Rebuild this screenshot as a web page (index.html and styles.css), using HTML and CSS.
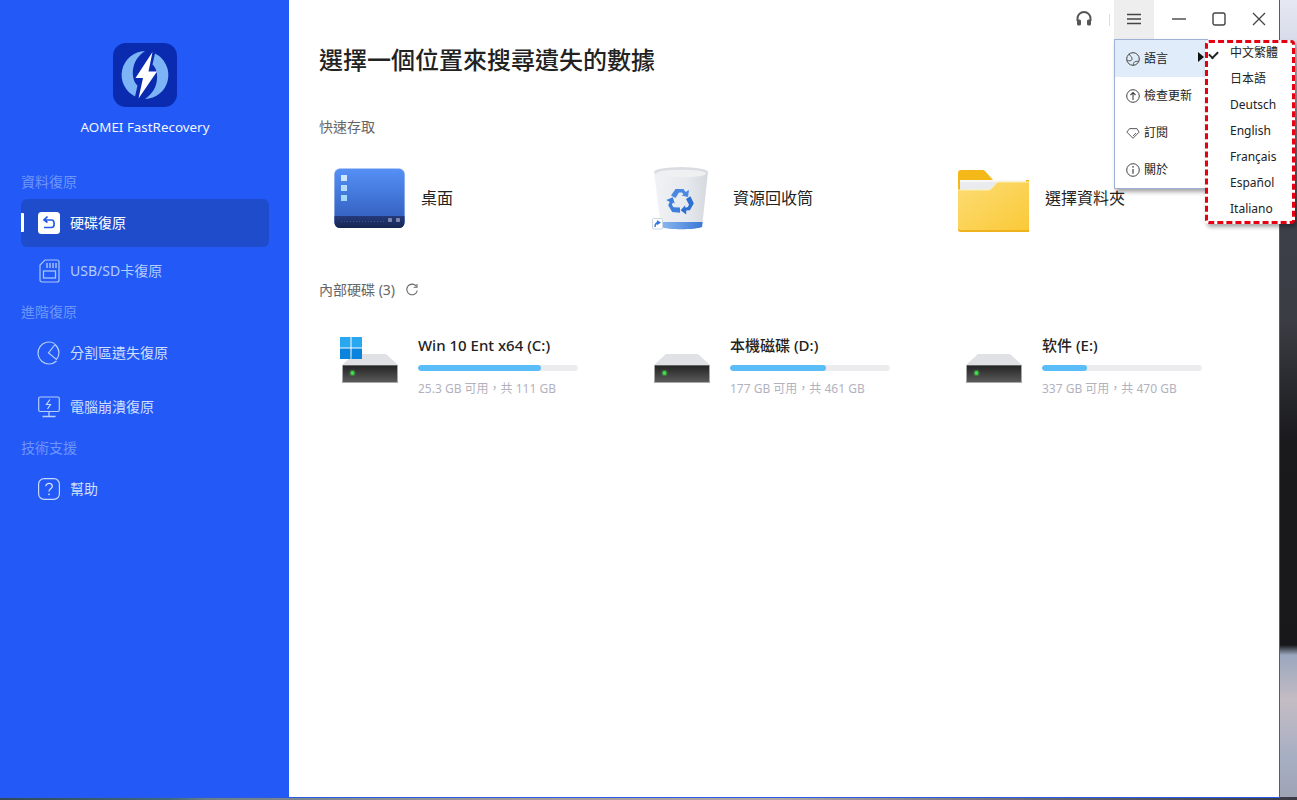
FILE: index.html
```html
<!DOCTYPE html>
<html lang="zh-Hant">
<head>
<meta charset="utf-8">
<title>AOMEI FastRecovery</title>
<link rel="stylesheet" href="styles.css">
</head>
<body>
<div class="window">
  <aside class="sidebar">
    <svg class="logo" viewBox="0 0 64 64" aria-hidden="true">
      <rect width="64" height="64" rx="13" fill="#0a2bb0"/>
      <path d="M32 8A24 24 0 0 0 22 53.500L24.500 42.500C18 37 16.500 18 32 8Z" fill="#7cb4f6"/>
      <path d="M32 56A24 24 0 0 0 42 10.500L39.500 21.500C46 27 47.500 46 32 56Z" fill="#7cb4f6"/>
      <path d="M39.500 9L22.500 35H30L25.500 55.500L44 28.500H35.500Z" fill="#fff"/>
    </svg>
    <div class="brand">AOMEI FastRecovery</div>
    <div class="section first">資料復原</div>
    <div class="nav active">
      <svg class="nav-icon" viewBox="0 0 22 22" aria-hidden="true">
        <rect width="22" height="22" rx="3.500" fill="#fff"/>
        <path d="M9.500 4.500L6 8L9.500 10.500M6.500 8H13.500C17 8 17 15.500 13.500 15.500H6" fill="none" stroke="#2359e8" stroke-width="1.700"/>
      </svg>
      <span>硬碟復原</span>
    </div>
    <div class="nav">
      <svg class="nav-icon sd" viewBox="0 0 22 24" aria-hidden="true">
        <path d="M7 1H19A2 2 0 0 1 21 3V21A2 2 0 0 1 19 23H4A2 2 0 0 1 2 21V6Z" fill="none" stroke="#a9c6fb" stroke-width="1.200"/>
        <path d="M9 4V9M12 4V9M15 4V9M18 4V9" stroke="#a9c6fb" stroke-width="1.400"/>
        <rect x="5.500" y="12" width="12" height="7" fill="none" stroke="#a9c6fb" stroke-width="1.300"/>
      </svg>
      <span>USB/SD卡復原</span>
    </div>
    <div class="section">進階復原</div>
    <div class="nav tall">
      <svg class="nav-icon wide" viewBox="0 0 24 24" aria-hidden="true">
        <path d="M17.500 2.500A11 11 0 1 0 19.500 20" fill="none" stroke="#b6cffc" stroke-width="1.200"/>
        <path d="M18 3.500L11.500 12L19.500 18.500C23 14 23 8 18 3.500Z" fill="none" stroke="#b6cffc" stroke-width="1.200"/>
      </svg>
      <span>分割區遺失復原</span>
    </div>
    <div class="nav tall">
      <svg class="nav-icon" viewBox="0 0 22 22" aria-hidden="true">
        <rect x="0.700" y="1" width="20.600" height="14.500" rx="1.500" fill="none" stroke="#b6cffc" stroke-width="1.200"/>
        <path d="M12 3.500L8.500 8.500H12.500L9.500 13" fill="none" stroke="#c5d9fd" stroke-width="1.200"/>
        <path d="M11 15.500V20M4.500 20.500H17.500" stroke="#b6cffc" stroke-width="1.300"/>
      </svg>
      <span>電腦崩潰復原</span>
    </div>
    <div class="section gap4">技術支援</div>
    <div class="nav tall">
      <svg class="nav-icon" viewBox="0 0 22 22" aria-hidden="true">
        <rect x="0.600" y="0.600" width="20.800" height="20.800" rx="5.500" fill="none" stroke="#c5d9fd" stroke-width="1.200"/>
        <path d="M7.800 8.300C7.800 4.500 14.300 4.500 14.300 8.300C14.300 10.800 11 10.800 11 13.500" fill="none" stroke="#d5e3fe" stroke-width="1.300"/>
        <circle cx="11" cy="16.300" r="0.900" fill="#d5e3fe"/>
      </svg>
      <span>幫助</span>
    </div>
  </aside>

  <main class="main">
    <header class="topbar">
      <svg class="tool-icon" viewBox="0 0 16 16" aria-hidden="true">
        <path d="M1.500 10V7.500A6.500 6.500 0 0 1 14.500 7.500V10" fill="none" stroke="#555" stroke-width="2"/>
        <rect x="1" y="8.500" width="4" height="6" rx="1.500" fill="#555"/>
        <rect x="11" y="8.500" width="4" height="6" rx="1.500" fill="#555"/>
      </svg>
      <span class="sep"></span>
      <div class="menu-anchor">
        <button class="winbtn open" type="button" aria-label="menu">
          <svg class="glyph" viewBox="0 0 14 14" aria-hidden="true"><path d="M0 2.500H14M0 7H14M0 11.500H14" stroke="#444" stroke-width="1.300"/></svg>
        </button>
        <div class="menu">
          <div class="menu-row hover">
            <svg class="menu-icon" viewBox="0 0 14 14" aria-hidden="true">
              <circle cx="7" cy="7" r="6.300" fill="none" stroke="#444" stroke-width="1"/>
              <path d="M3 1.800C4 4 6.500 5 6 7.500C5.700 9 3 9 1.200 8.500M7.500 13.200C7 10.500 8.500 9 12.700 9.300" fill="none" stroke="#444" stroke-width="0.900"/>
            </svg>
            <span>語言</span>
            <i class="arrow"></i>
          </div>
          <div class="menu-row">
            <svg class="menu-icon" viewBox="0 0 14 14" aria-hidden="true">
              <circle cx="7" cy="7" r="6.300" fill="none" stroke="#444" stroke-width="1"/>
              <path d="M7 11V3.800M4.500 6L7 3.500L9.500 6" fill="none" stroke="#444" stroke-width="1.100"/>
            </svg>
            <span>檢查更新</span>
          </div>
          <div class="menu-row">
            <svg class="menu-icon" viewBox="0 0 16 14" aria-hidden="true">
              <path d="M4 2H12.500L15 6L8 13L1 6Z" fill="none" stroke="#444" stroke-width="1"/>
              <path d="M8 10.500L11.500 7" stroke="#444" stroke-width="1"/>
            </svg>
            <span>訂閱</span>
          </div>
          <div class="menu-row">
            <svg class="menu-icon" viewBox="0 0 14 14" aria-hidden="true">
              <circle cx="7" cy="7" r="6.300" fill="none" stroke="#444" stroke-width="1"/>
              <path d="M7 6V10.800" stroke="#444" stroke-width="1.200"/>
              <circle cx="7" cy="3.900" r="0.800" fill="#444"/>
            </svg>
            <span>關於</span>
          </div>
          <ul class="submenu">
            <li class="checked">中文繁體</li>
            <li>日本語</li>
            <li>Deutsch</li>
            <li>English</li>
            <li>Français</li>
            <li>Español</li>
            <li>Italiano</li>
          </ul>
        </div>
      </div>
      <div class="win-controls">
        <button class="winbtn" type="button" aria-label="minimize">
          <svg class="glyph" viewBox="0 0 14 14" aria-hidden="true"><path d="M0 7H14" stroke="#444" stroke-width="1.400"/></svg>
        </button>
        <button class="winbtn" type="button" aria-label="maximize">
          <svg class="glyph" viewBox="0 0 14 14" aria-hidden="true"><rect x="1" y="1" width="12" height="12" rx="2" fill="none" stroke="#444" stroke-width="1.400"/></svg>
        </button>
        <button class="winbtn" type="button" aria-label="close">
          <svg class="glyph" viewBox="0 0 14 14" aria-hidden="true"><path d="M1 1L13 13M13 1L1 13" stroke="#444" stroke-width="1.300"/></svg>
        </button>
      </div>
    </header>

    <div class="content">
      <h1 class="title">選擇一個位置來搜尋遺失的數據</h1>
      <div class="label quick-label"><span>快速存取</span></div>
      <div class="grid quick">
        <div class="place">
          <svg class="place-icon" viewBox="0 0 72 68" aria-hidden="true">
            <defs>
              <linearGradient id="deskG" x1="0" y1="0" x2="0" y2="1"><stop offset="0" stop-color="#5590f5"/><stop offset="1" stop-color="#2e58b8"/></linearGradient>
              <linearGradient id="deskB" x1="0" y1="0" x2="0" y2="1"><stop offset="0" stop-color="#243a7c"/><stop offset="1" stop-color="#172650"/></linearGradient>
            </defs>
            <rect x="0" y="3" width="71" height="60" rx="6" fill="#cfdcf6"/>
            <rect x="0.500" y="3.800" width="70" height="59" rx="5.500" fill="url(#deskG)"/>
            <path d="M0.500 51H70.500V57.500A5.500 5.500 0 0 1 65 63H6A5.500 5.500 0 0 1 0.500 57.500Z" fill="url(#deskB)"/>
            <rect x="7" y="10" width="6" height="6" fill="#cfe6fc"/>
            <rect x="7" y="20" width="6" height="6" fill="#b6dcfa"/>
            <rect x="7" y="30" width="6" height="6" fill="#a4daf8"/>
            <path d="M7 56.500H50" stroke="#40558f" stroke-width="1" stroke-dasharray="1 2"/>
            <rect x="54" y="53" width="4" height="4" rx="1" fill="#7f88ac"/>
            <rect x="62" y="53" width="4" height="4" rx="1" fill="#7f88ac"/>
          </svg>
          <span class="place-name">桌面</span>
        </div>
        <div class="place">
          <svg class="place-icon" viewBox="0 0 72 68" aria-hidden="true">
            <defs>
              <linearGradient id="binG" x1="0" y1="0" x2="1" y2="0"><stop offset="0" stop-color="#f0f2f5"/><stop offset="0.600" stop-color="#e6e9ed"/><stop offset="1" stop-color="#d5d9de"/></linearGradient>
              <linearGradient id="binB" x1="0" y1="0" x2="1" y2="0"><stop offset="0" stop-color="#8db8ef"/><stop offset="1" stop-color="#3a78d6"/></linearGradient>
              <path id="rc" d="M-9.500 -6L-5 -12.500H3L5 -9.500L8.500 -11.500L7.500 -4.500L1 -6L3 -7L1.500 -9H-1.500L-5 -3.500Z"/>
            </defs>
            <path d="M8 7L15 62C22 65 49 65 56 62L62 7Z" fill="url(#binG)"/>
            <path d="M14.400 57H56.600L56 62C49 65 22 65 15 62Z" fill="url(#binB)"/>
            <ellipse cx="35" cy="7" rx="27" ry="5" fill="#d9dde1"/>
            <ellipse cx="35" cy="8.500" rx="25" ry="3.800" fill="#eef0f2"/>
            <g transform="translate(34.500 36.500)">
              <use href="#rc" fill="#4a88e2"/>
              <use href="#rc" fill="#2f6fd2" transform="rotate(120)"/>
              <use href="#rc" fill="#3f7fdc" transform="rotate(240)"/>
            </g>
            <rect x="6.500" y="53.500" width="10" height="10.500" rx="1" fill="#fff" stroke="#cdd6e4" stroke-width="1"/>
            <path d="M9 62C9 58.500 10.500 57.500 13 57.500M11 55.800L13.700 57.500L11 59.500" fill="none" stroke="#2f78de" stroke-width="1.400"/>
          </svg>
          <span class="place-name">資源回收筒</span>
        </div>
        <div class="place">
          <svg class="place-icon" viewBox="0 0 72 68" aria-hidden="true">
            <defs>
              <linearGradient id="foldG" x1="0" y1="0" x2="1" y2="1"><stop offset="0" stop-color="#fbdc74"/><stop offset="1" stop-color="#fbc937"/></linearGradient>
            </defs>
            <path d="M0 8A3 3 0 0 1 3 5H24A3 3 0 0 1 27 6L35 15H71V60H0Z" fill="#f4b818"/>
            <path d="M2 15H68V40H2Z" fill="#e9ebee"/>
            <path d="M2 15H68V17H2Z" fill="#f7f7f7"/>
            <path d="M0 25H30C32 25 33 24 34 23L38 18.500C39 17.500 40 17 41.500 17H71V67H3A3 3 0 0 1 0 64Z" fill="url(#foldG)"/>
            <path d="M0 25H30C32 25 33 24 34 23L38 18.500C39 17.500 40 17 41.500 17H71" fill="none" stroke="#fdeeb4" stroke-width="1"/>
            <path d="M0 64A3 3 0 0 0 3 67H71V65H2Z" fill="#eeb21f"/>
          </svg>
          <span class="place-name">選擇資料夾</span>
        </div>
      </div>

      <div class="label drive-label">
        <span>內部硬碟 (3)</span>
        <svg class="refresh" viewBox="0 0 14 14" aria-hidden="true">
          <path d="M11.500 3.500A5.300 5.300 0 1 0 12.300 7.500" fill="none" stroke="#666" stroke-width="1.100"/>
          <path d="M12 1V4.300H8.700" fill="none" stroke="#666" stroke-width="1.100"/>
        </svg>
      </div>
      <div class="grid drives">
        <div class="drive">
          <svg class="drive-icon" viewBox="0 0 72 50" aria-hidden="true">
            <defs>
              <linearGradient id="hddG" x1="0" y1="0" x2="0" y2="1"><stop offset="0" stop-color="#232323"/><stop offset="1" stop-color="#5a5a5a"/></linearGradient>
              <g id="hddBody">
                <path d="M20 20H52L64 31V49H8V31Z" fill="#dfe1e4"/>
                <rect x="8" y="31" width="56" height="18" fill="#a8a8a8"/>
                <rect x="9" y="31.500" width="54" height="16.500" fill="url(#hddG)"/>
                <circle cx="18.500" cy="39" r="3.200" fill="#3ee04a" opacity="0.300"/>
                <circle cx="18.500" cy="39" r="1.900" fill="#3ee04a"/>
              </g>
            </defs>
            <use href="#hddBody"/>
            <rect x="6" y="3" width="10.500" height="10.500" fill="#29a8ef"/>
            <rect x="17.500" y="3" width="10.500" height="10.500" fill="#29a8ef"/>
            <rect x="6" y="14.500" width="10.500" height="10.500" fill="#0c84de"/>
            <rect x="17.500" y="14.500" width="10.500" height="10.500" fill="#0c84de"/>
          </svg>
          <div class="drive-info">
            <div class="drive-name">Win 10 Ent x64 (C:)</div>
            <div class="bar"><div class="fill" style="width:77%"></div></div>
            <div class="drive-stat">25.3 GB 可用，共 111 GB</div>
          </div>
        </div>
        <div class="drive">
          <svg class="drive-icon" viewBox="0 0 72 50" aria-hidden="true">
            <use href="#hddBody"/>
          </svg>
          <div class="drive-info">
            <div class="drive-name">本機磁碟 (D:)</div>
            <div class="bar"><div class="fill" style="width:60%"></div></div>
            <div class="drive-stat">177 GB 可用，共 461 GB</div>
          </div>
        </div>
        <div class="drive">
          <svg class="drive-icon" viewBox="0 0 72 50" aria-hidden="true">
            <use href="#hddBody"/>
          </svg>
          <div class="drive-info">
            <div class="drive-name">软件 (E:)</div>
            <div class="bar"><div class="fill" style="width:28%"></div></div>
            <div class="drive-stat">337 GB 可用，共 470 GB</div>
          </div>
        </div>
      </div>
    </div>
  </main>
</div>
</body>
</html>
```
FILE: styles.css
```css
* { box-sizing: border-box; }

html, body { height: 100%; }

body {
  margin: 0;
  overflow: hidden;
  font-family: "Noto Sans", "Noto Sans CJK TC", sans-serif;
  background-color: #777;
  background-image:
    linear-gradient(90deg, #2f4a58 0, #3f6a7d 13%, #6a7f88 16%, #a89a96 40%, #b5a7a2 60%, #6a6670 80%, #3c3a42 100%),
    linear-gradient(180deg, #e6e8f3 0, #d8dbe9 40px, #6b7382 140px, #3c3f48 225px, #3b3d44 320px, #1a1a1d 440px, #18181b 645px, #9aa7be 655px, #c4bcc4 700px, #a5aec2 760px, #9fa3b3 800px);
  background-size: 100% 3px, 100% 100%;
  background-position: left bottom, left top;
  background-repeat: no-repeat;
}

.window {
  position: relative;
  display: flex;
  width: 1280px;
  height: 798px;
  background: #fff;
  border-right: 1px solid #2a5be8;
  border-bottom: 1px solid #2a5be8;
}

/* sidebar */
.sidebar {
  flex: 0 0 289px;
  display: flex;
  flex-direction: column;
  align-items: stretch;
  padding: 43px 20px 0 21px;
  background: #2259f7;
  color: #fff;
}

.logo {
  display: block;
  align-self: center;
  width: 64px;
  height: 64px;
  margin-left: -1px;
  flex: none;
}

.brand {
  margin-top: 10px;
  height: 20px;
  line-height: 20px;
  font-size: 13.4px;
  text-align: center;
  color: #f1f5ff;
  white-space: nowrap;
}

.section {
  height: 20px;
  line-height: 20px;
  margin-top: 7px;
  font-size: 14px;
  color: #6f96f7;
  white-space: nowrap;
}

.section.first { margin-top: 35px; margin-bottom: 7px; }
.section.gap4 { margin-top: 4px; }

.section + .nav.tall { margin-top: 4px; }

.nav {
  position: relative;
  display: flex;
  align-items: center;
  gap: 10px;
  height: 48px;
  padding-left: 17px;
  font-size: 14px;
  color: #b4cdfc;
  border-radius: 6px;
  white-space: nowrap;
  flex: none;
}

.nav span { padding-bottom: 2px; }

.nav.tall { height: 54px; color: #cfdffd; }

.nav.active {
  background: #1e4ccb;
  color: #fff;
}

.nav.active::before {
  content: "";
  position: absolute;
  left: 0;
  top: 14px;
  width: 3px;
  height: 19px;
  background: #fff;
  border-radius: 0 1px 1px 0;
}

.nav-icon {
  width: 22px;
  height: 22px;
  flex: none;
  overflow: visible;
}

.nav-icon.sd { height: 24px; }
.nav-icon.wide { width: 24px; height: 24px; margin: 0 -1px; }

/* main */
.main {
  flex: 1;
  min-width: 0;
  display: flex;
  flex-direction: column;
}

.topbar {
  display: flex;
  align-items: center;
  justify-content: flex-end;
  height: 39px;
  flex: none;
}

.tool-icon {
  width: 16px;
  height: 16px;
  margin-bottom: 1px;
  flex: none;
}

.sep {
  width: 1px;
  height: 12px;
  margin: 0 4px 0 17px;
  background: #dcdcdc;
  flex: none;
}

.menu-anchor {
  position: relative;
  margin-right: 5px;
  flex: none;
}

.win-controls { display: flex; flex: none; }

.winbtn {
  display: flex;
  align-items: center;
  justify-content: center;
  width: 40px;
  height: 39px;
  padding: 0 0 1px;
  border: 0;
  background: transparent;
}

.winbtn.open { background: #eeeeee; }

.glyph { width: 14px; height: 14px; }

.menu {
  position: absolute;
  top: 39px;
  left: 0;
  width: 94px;
  height: 150px;
  border: 1px solid #9fb2d6;
  background: #fff;
  box-shadow: 2px 3px 4px rgba(0, 0, 0, 0.35);
  z-index: 5;
}

.menu-row {
  display: flex;
  align-items: center;
  gap: 4px;
  height: 37px;
  padding-left: 11px;
  font-size: 12px;
  color: #222;
  white-space: nowrap;
}

.menu-row span { padding-bottom: 2px; }

.menu-row.hover { background: #e0ecf9; }

.menu-icon {
  width: 14px;
  height: 14px;
  flex: none;
  overflow: visible;
}

.arrow {
  position: absolute;
  left: 83px;
  top: 12px;
  width: 0;
  height: 0;
  border-left: 6px solid #111;
  border-top: 5px solid transparent;
  border-bottom: 5px solid transparent;
}

.submenu {
  position: absolute;
  left: 90px;
  top: 0;
  width: 90px;
  height: 184px;
  margin: 0;
  padding: 0 0 0 22px;
  list-style: none;
  background: #fff;
  border: 3px dashed #e60012;
  border-radius: 4px;
  box-shadow: 2px 3px 4px rgba(0, 0, 0, 0.35);
  z-index: 6;
}

.submenu li {
  position: relative;
  height: 26px;
  line-height: 26px;
  font-size: 12px;
  color: #222;
  white-space: nowrap;
}

.submenu li:first-child { margin-top: -3px; }

.submenu li.checked::before {
  content: "";
  position: absolute;
  left: -21px;
  top: 11px;
  width: 7px;
  height: 4px;
  border-left: 2px solid #222;
  border-bottom: 2px solid #222;
  transform: rotate(-45deg);
}

.content {
  padding: 4px 0 0 30px;
}

.title {
  margin: 0;
  height: 34px;
  line-height: 34px;
  font-size: 24px;
  font-weight: 500;
  color: #222;
  white-space: nowrap;
}

.label {
  display: flex;
  align-items: center;
  gap: 10px;
  height: 20px;
  font-size: 14px;
  color: #666;
}

.label span { padding-bottom: 2px; }

.quick-label { margin-top: 40px; }
.drive-label { margin-top: 47px; }

.grid {
  display: grid;
  grid-template-columns: repeat(3, 312px);
  margin-left: 15px;
}

.quick { margin-top: 28px; }
.drives { margin-top: 34px; }

.place {
  display: flex;
  align-items: center;
  gap: 15px;
  height: 68px;
}

.place-icon {
  width: 72px;
  height: 68px;
  flex: none;
  overflow: visible;
}

.place-name {
  padding-bottom: 4px;
  font-size: 16px;
  color: #222;
  white-space: nowrap;
}

.refresh { width: 14px; height: 14px; flex: none; }

.drive {
  display: flex;
  gap: 12px;
}

.drive-icon {
  width: 72px;
  height: 50px;
  flex: none;
}

.drive-name {
  height: 22px;
  line-height: 22px;
  font-size: 15px;
  font-weight: 500;
  color: #222;
  white-space: nowrap;
}

.bar {
  width: 160px;
  height: 6px;
  margin-top: 9px;
  border-radius: 3px;
  background: #ececee;
  overflow: hidden;
}

.fill {
  height: 100%;
  border-radius: 3px;
  background: #5bbdf7;
}

.drive-stat {
  height: 18px;
  line-height: 18px;
  margin-top: 9px;
  font-size: 12px;
  color: #b2b2bf;
  white-space: nowrap;
}
```
